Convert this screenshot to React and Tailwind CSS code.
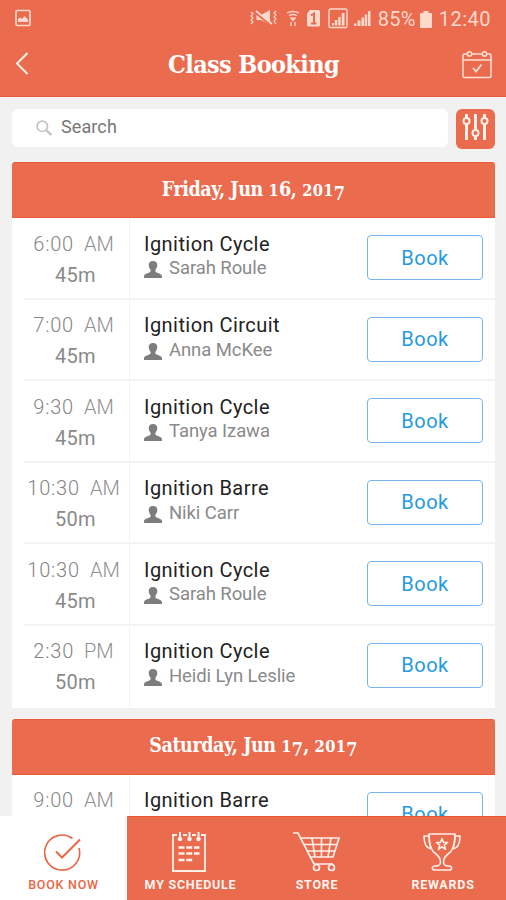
import React from "react";

const friday = [
  ["6:00", "AM", "45m", "Ignition Cycle", "Sarah Roule"],
  ["7:00", "AM", "45m", "Ignition Circuit", "Anna McKee"],
  ["9:30", "AM", "45m", "Ignition Cycle", "Tanya Izawa"],
  ["10:30", "AM", "50m", "Ignition Barre", "Niki Carr"],
  ["10:30", "AM", "45m", "Ignition Cycle", "Sarah Roule"],
  ["2:30", "PM", "50m", "Ignition Cycle", "Heidi Lyn Leslie"],
];
const saturday = [["9:00", "AM", "", "Ignition Barre", ""]];

// Old-style figures: 0-2 sit at x-height, 7 hangs below the baseline.
function Figures({ value }) {
  return value.split("").map((c, i) =>
    "012".includes(c) ? (
      <span key={i} className="text-[0.84em] tracking-[0.3px]">{c}</span>
    ) : c === "7" ? (
      <span key={i} className="align-[-4px] text-[0.92em] leading-none tracking-[0.2px]">{c}</span>
    ) : (
      c
    )
  );
}

function StatusBar() {
  return (
    <div className="flex h-9 items-center pl-[15px] pr-[15px] pt-[2px] text-[#ffd9cc]">
      <svg className="-mt-[2px]" width="16" height="18" viewBox="0 0 16 18" fill="none" stroke="currentColor" strokeWidth="1.7">
        <rect x="1" y="1.5" width="14" height="15" rx="1.5" />
        <path d="M3 13V10l2.500-1.500L7 10l2.500-3L13 10.500V13z" fill="currentColor" stroke="none" />
      </svg>
      <svg className="ml-auto" width="122" height="22" viewBox="0 0 122 22" fill="currentColor">
        <path d="M1 4l2 2-2 2 2 2-2 2 2 2-2 2M26 3l-2 2 2 2-2 2 2 2-2 2 2 3" fill="none" stroke="currentColor" strokeWidth="1.200" />
        <path d="M6.500 7h4.500l9-5v15l-9-5H6.500z" />
        <path d="M5 4l17 14" stroke="#ea6b4e" strokeWidth="2.500" />
        <path d="M6 3l16 13" stroke="currentColor" strokeWidth="1.700" />
        <g fill="none" stroke="currentColor" strokeWidth="1.300">
          <path d="M37 5q6-3 12 0M39 7.500q4-2 8 0" />
          <path d="M41 14v4M45 14v4" />
        </g>
        <path d="M39.500 9.500h7l-3.500 4z" />
        <path d="M60 2h8.500q1.500 0 1.500 1.500V17q0 1.500-1.500 1.500h-10Q57 18.500 57 17V5.500z" />
        <path d="M61 7.500l3-2V15M61 15.500h5.500" fill="none" stroke="#ea6b4e" strokeWidth="2" />
        <rect x="79" y="1" width="18" height="18.500" rx="1.500" fill="none" stroke="currentColor" strokeWidth="1.400" />
        <path d="M82 15h2v2.500h-2zM84.800 12h2.500v5.500h-2.500zM88.200 9h2.500v8.500h-2.500zM91.800 5h2.700v12.500h-2.700z" />
        <path d="M104 15.500h2.500v2.500H104zM107.500 12.500h3v5.500h-3zM111.500 9.500h2.500v8.500h-2.500zM114.700 6.500h2.500V18h-2.500zM118 3h2.500v15H118z" />
      </svg>
      <span className="ml-[6px] whitespace-nowrap text-[20px] leading-none tracking-[0.300px]">85%</span>
      <svg className="ml-[4px]" width="12" height="17" viewBox="0 0 12 17" fill="currentColor">
        <path d="M3.500 0h5v2H11q1 0 1 1v13q0 1-1 1H1q-1 0-1-1V3q0-1 1-1h2.500z" />
      </svg>
      <span className="ml-[7px] text-[20px] leading-none tracking-[0.500px]">12:40</span>
    </div>
  );
}

function Header() {
  return (
    <header className="h-[97px] shrink-0 border-b border-[#e75a35] bg-[#ea6b4e]">
      <StatusBar />
      <div className="flex h-[56px] items-center justify-between pl-[15px] pr-[14px]">
        <svg width="30" height="24" viewBox="0 0 30 24" fill="none" stroke="#fff3ee" strokeWidth="1.900">
          <path d="M12.500 1L2 11.500 12.500 22" />
        </svg>
        <h1 className="whitespace-nowrap font-['DejaVu_Serif_Condensed','DejaVu_Serif',serif] text-[25px] font-bold leading-none tracking-[-0.650px] text-white">Class Booking</h1>
        <svg width="30" height="29" viewBox="0 0 30 29" fill="none" stroke="#ffe0d5" strokeWidth="1.500">
          <path d="M5 4H2.500q-1.500 0-1.500 1.500V26q0 1.500 1.500 1.500h25q1.500 0 1.500-1.500V5.500Q29 4 27.500 4H25M10 4h11M1 10h28" />
          <circle cx="7.500" cy="4" r="2.200" /><circle cx="22.500" cy="4" r="2.200" />
          <path d="M11 18l3 3.500 5.500-7" strokeWidth="1.800" />
        </svg>
      </div>
    </header>
  );
}

function DateBar({ text, figures }) {
  const [day, year] = figures;
  return (
    <h2 className="flex h-[56px] items-center justify-center rounded-t-[3px] border-y border-[#e85d38] bg-[#ea6b4e] font-['DejaVu_Serif_Condensed','DejaVu_Serif',serif] text-[19.500px] font-bold tracking-[-0.450px] text-white">
      <span className="whitespace-pre leading-6">{text} <Figures value={day} />, <Figures value={year} /></span>
    </h2>
  );
}

function ClassRow({ row, last }) {
  const [time, half, length, name, coach] = row;
  return (
    <div className="flex h-[81.600px] pl-3">
      <div className={`flex flex-1 ${last ? "" : "border-b-2 border-[#f1f3f4]"}`}>
        <div className="flex w-[106px] shrink-0 flex-col items-center border-r border-[#f1f4f5] pr-[6px] pt-[10.500px] text-[20px] leading-[31px] text-[#858585]">
          <div className="whitespace-nowrap font-light tracking-[0.800px]">{time}<span className="ml-[10px] tracking-normal text-[#909090]">{half}</span></div>
          {length && <div className="pl-[4px] tracking-[0.300px] text-[#8a8a8a]">{length}</div>}
        </div>
        <div className="flex-1 pl-[14px] pt-[13.500px]">
          <div className="whitespace-nowrap text-[20px] leading-[24px] tracking-[0.450px] text-[#222]">{name}</div>
          {coach && (
            <div className="flex items-center whitespace-nowrap pt-[0.500px] text-[18.500px] leading-[24px] tracking-[-0.080px] text-[#8a8a8a]">
              <svg className="mr-[7px] mt-[3px]" width="18" height="17" viewBox="0 0 18 17" fill="#7d7d7d">
                <path d="M9 0c3 0 4.300 1.700 4.300 4.200 0 2.300-1.300 3.400-1.800 4.600-.4 1 0 2 .5 2.400 2 1 6 1.300 6 4.300V17H0v-1.500c0-3 4-3.300 6-4.300.5-.4.900-1.400.5-2.400C6 7.600 4.700 6.500 4.700 4.200 4.700 1.700 6 0 9 0z" />
              </svg>
              {coach}
            </div>
          )}
        </div>
        <button className="mr-[12px] mt-[17px] h-[45px] w-[116px] shrink-0 rounded-[4px] border-[1.500px] border-[#79b4ec] text-[20px] tracking-[0.500px] text-[#279adf]">Book</button>
      </div>
    </div>
  );
}

function TabIcon({ name }) {
  if (name === "BOOK NOW")
    return (
      <svg className="mr-[2px] mt-[2px]" width="38" height="38" viewBox="0 0 38 38" fill="none" stroke="#e96543" strokeWidth="1.600">
        <path d="M28.500 4.500A17.500 17.500 0 1 0 35 14" />
        <path d="M12 17.500l6 6L36 5.500" strokeWidth="2" />
      </svg>
    );
  if (name === "MY SCHEDULE")
    return (
      <svg className="mr-[3px]" width="34" height="40" viewBox="0 0 34 40" fill="none" stroke="#fff0ea" strokeWidth="1.800">
        <path d="M5 3H1v36h32V3h-4M11 3h4M20 3h4" />
        <path d="M8 0v6M17.500 0v6M26.500 0v6" strokeWidth="2" />
        <g fill="#fff0ea" stroke="none"><circle cx="8" cy="7" r="2.300" /><circle cx="17.500" cy="7" r="2.300" /><circle cx="26.500" cy="7" r="2.300" /></g>
        <path d="M6.500 15.500h21M6.500 21.500h21M6.500 28h14" strokeWidth="2.600" strokeDasharray="6 1.700" />
      </svg>
    );
  if (name === "STORE")
    return (
      <svg width="48" height="40" viewBox="0 0 48 40" fill="none" stroke="#fff0ea" strokeWidth="1.700">
        <path d="M0 1h5l16 31M8 6h38l-6 19H17M11 12.500h33M14 19h28M19 6l3 19M28.500 6v19M38 6l-3 19M21 32h19" />
        <circle cx="23.500" cy="35.500" r="3" /><circle cx="38.500" cy="35.500" r="3" />
      </svg>
    );
  return (
    <svg className="mr-[2px]" width="38" height="38" viewBox="0 0 38 38" fill="none" stroke="#fff0ea" strokeWidth="1.600" strokeLinejoin="round">
      <path d="M6 1h26c0 11-2 17-7 20-4 3-4.500 5-4.500 8 0 3 2 4 5 4 4 0 4 4 1 4h-15c-3 0-3-4 1-4 3 0 5-1 5-4 0-3-.5-5-4.500-8C8 18 6 12 6 1z" />
      <path d="M6 3H1c0 7 2 12 7 13M32 3h5c0 7-2 12-7 13M6 3q0 7 2 13M32 3q0 7-2 13" strokeWidth="1.600" />
      <path d="M19 5.500l1.500 4h4l-3.200 2.600 1.200 4.200-3.500-2.500-3.500 2.500 1.200-4.200-3.200-2.600h4z" />
    </svg>
  );
}

function Tab({ name, active }) {
  return (
    <div className={`flex flex-col items-center ${active ? "bg-white text-[#e96543]" : "border-t border-[#e55a35] bg-[#ea6b4e] text-[#fff4ef]"}`}>
      <div className={`flex h-[60px] items-end justify-center pb-[5px] ${active ? "mt-px" : ""}`}>
        <div className="flex h-10 items-center"><TabIcon name={name} /></div>
      </div>
      <div className={`whitespace-nowrap text-[12.500px] leading-[15px] ${active ? "font-medium tracking-[0.750px]" : "font-bold tracking-[0.750px]"}`}>{name}</div>
    </div>
  );
}

export default function App() {
  return (
    <div className="flex h-[900px] w-[506px] flex-col overflow-hidden bg-[#f1f1f2] font-[Roboto,sans-serif]">
      <Header />
      <main className="min-h-0 flex-1 overflow-hidden pl-3 pr-[11px] pt-3">
        <div className="flex h-[53px] items-start gap-2">
          <div className="flex h-[38px] flex-1 items-center rounded-[6px] bg-white pl-6 text-[18px] tracking-[0.100px] text-[#777]">
            <svg className="mr-[9px]" width="16" height="16" viewBox="0 0 16 16" fill="none" stroke="#c4c4c4" strokeWidth="1.700">
              <circle cx="6.300" cy="6.300" r="5.200" /><path d="M10 10l5.300 5" strokeWidth="2.300" />
            </svg>
            <span className="-mt-[4px]">Search</span>
          </div>
          <div className="flex h-[40px] w-[39px] justify-center rounded-[6px] bg-[#ea6b4e] pt-[5px]">
            <svg width="27" height="27" viewBox="0 0 27 27" fill="none" stroke="#fff0ea" strokeWidth="2">
              <path d="M4.500 0v4M4.500 10v16M13.500 0v16M13.500 22v4M22.500 0v4M22.500 10v16" strokeWidth="3" />
              <circle cx="4.500" cy="7" r="3" /><circle cx="13.500" cy="19" r="3" /><circle cx="22.500" cy="7" r="3" />
            </svg>
          </div>
        </div>
        <section className="bg-white">
          <DateBar text="Friday, Jun" figures={["16", "2017"]} />
          {friday.map((r, i) => <ClassRow key={i} row={r} last={i === 5} />)}
        </section>
        <section className="mt-[11.400px] bg-white">
          <DateBar text="Saturday, Jun" figures={["17", "2017"]} />
          {saturday.map((r, i) => <ClassRow key={i} row={r} last />)}
        </section>
      </main>
      <nav className="grid h-[84px] shrink-0 grid-cols-[127px_127px_126px_126px]">
        <Tab name="BOOK NOW" active />
        <Tab name="MY SCHEDULE" />
        <Tab name="STORE" />
        <Tab name="REWARDS" />
      </nav>
    </div>
  );
}
